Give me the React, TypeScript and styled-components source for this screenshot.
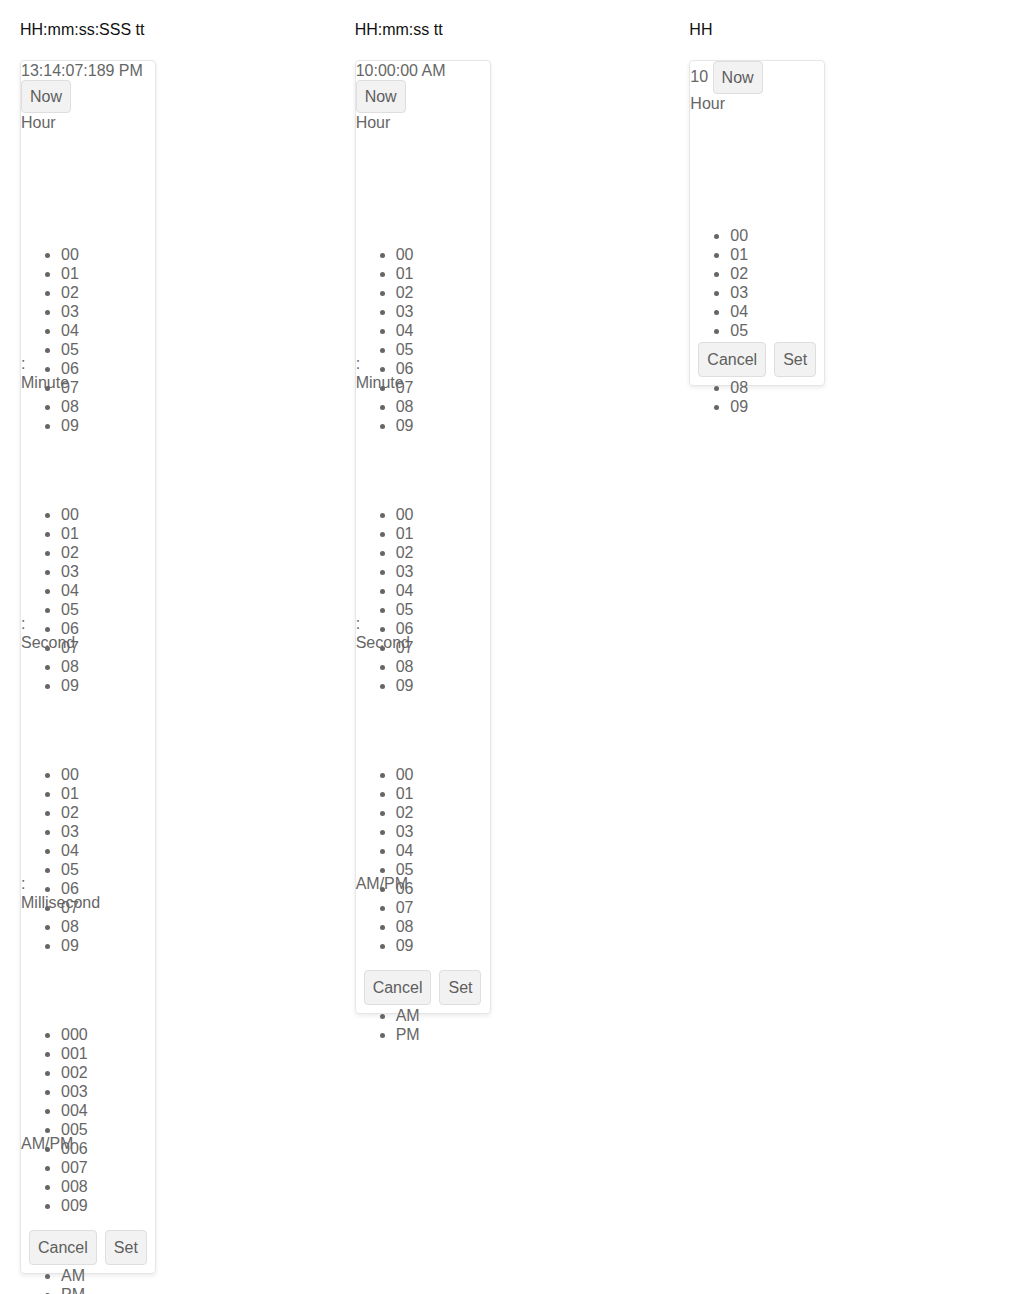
import React from "react";
import styled, { createGlobalStyle } from "styled-components";

const Global = createGlobalStyle`
  html, body { margin: 0; padding: 0; background: #fff; }
  body { font-family: "Liberation Sans", Arial, sans-serif; font-size: 16px; }
`;

const Page = styled.div`
  display: grid;
  grid-template-columns: repeat(3, 1fr);
  column-gap: 20px;
  padding: 20px;
  align-items: start;
`;

const Column = styled.div`
  display: flex;
  flex-direction: column;
  align-items: flex-start;
`;

const Title = styled.div`
  color: #111;
  line-height: 19px;
  margin-bottom: 21px;
`;

const Panel = styled.div`
  width: 134px;
  border: 1px solid #e6e6e6;
  border-radius: 4px;
  box-shadow: 0 2px 4px rgba(0, 0, 0, 0.08);
  color: #666;
  line-height: 19px;
`;

const Header = styled.div`
  line-height: 19px;
`;

const Btn = styled.button<{ $tall?: boolean }>`
  font-family: "Liberation Sans", Arial, sans-serif;
  font-size: 16px;
  line-height: 19px;
  color: #5e5e5e;
  background: #f2f2f2;
  border: 1px solid #dedede;
  border-radius: 4px;
  padding: ${(p) => (p.$tall ? "7px 8px" : "6px 8px")};
  margin: 0;
  vertical-align: middle;
`;

const Label = styled.div`
  line-height: 19px;
`;

const Sep = styled.div`
  line-height: 19px;
`;

const Box = styled.div`
  overflow: visible;
`;

const List = styled.ul`
  margin: 16px 0;
  padding-left: 40px;
  line-height: 19px;
  transform: translateY(97px);
  list-style: disc;
`;

const Footer = styled.div`
  position: relative;
  z-index: 1;
  display: flex;
  gap: 8px;
  padding: 7px 8px 8px;
`;

const pad = (n: number, w: number) => String(n).padStart(w, "0");

type Part = { label: string; items: string[] };

const hours: Part = { label: "Hour", items: Array.from({ length: 10 }, (_, i) => pad(i, 2)) };
const minutes: Part = { label: "Minute", items: Array.from({ length: 10 }, (_, i) => pad(i, 2)) };
const seconds: Part = { label: "Second", items: Array.from({ length: 10 }, (_, i) => pad(i, 2)) };
const millis: Part = { label: "Millisecond", items: Array.from({ length: 10 }, (_, i) => pad(i, 3)) };
const ampm: Part = { label: "AM/PM", items: ["AM", "PM"] };

type Picker = {
  title: string;
  value: string;
  inline: boolean;
  parts: Part[];
  tt: boolean;
};

const pickers: Picker[] = [
  { title: "HH:mm:ss:SSS tt", value: "13:14:07:189 PM", inline: false, parts: [hours, minutes, seconds, millis], tt: true },
  { title: "HH:mm:ss tt", value: "10:00:00 AM", inline: false, parts: [hours, minutes, seconds], tt: true },
  { title: "HH", value: "10", inline: true, parts: [hours], tt: false },
];

function PartBlock({ part }: { part: Part }) {
  return (
    <>
      <Label>{part.label}</Label>
      <Box>
        <List>
          {part.items.map((it) => (
            <li key={it}>{it}</li>
          ))}
        </List>
      </Box>
    </>
  );
}

export default function App() {
  return (
    <>
      <Global />
      <Page>
        {pickers.map((p) => (
          <Column key={p.title}>
            <Title>{p.title}</Title>
            <Panel>
              <Header>
                {p.value}
                {p.inline ? " " : <br />}
                <Btn>Now</Btn>
              </Header>
              {p.parts.map((part, i) => (
                <React.Fragment key={part.label}>
                  {i > 0 && <Sep>:</Sep>}
                  <PartBlock part={part} />
                </React.Fragment>
              ))}
              {p.tt && <PartBlock part={ampm} />}
              <Footer>
                <Btn $tall>Cancel</Btn>
                <Btn $tall>Set</Btn>
              </Footer>
            </Panel>
          </Column>
        ))}
      </Page>
    </>
  );
}
